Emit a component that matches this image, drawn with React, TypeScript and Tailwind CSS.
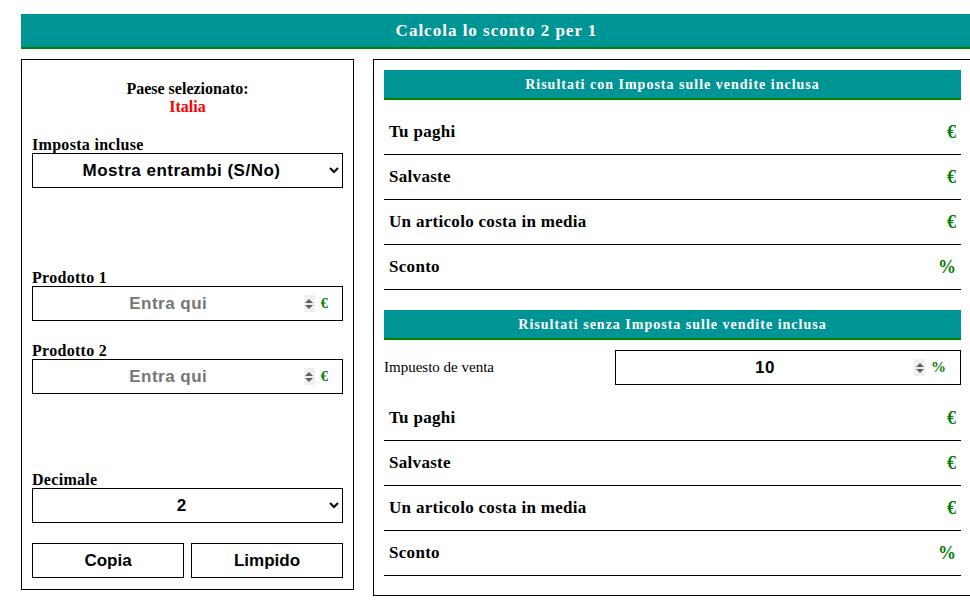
import React from 'react'

const serif = "font-['Liberation_Serif','Times_New_Roman',serif]"
const sans = "font-['Liberation_Sans',Arial,sans-serif]"

const ResultRow: React.FC<{ label: string; unit: string }> = ({ label, unit }) => (
  <div className="h-[45px] flex items-center justify-between pl-[5px] pr-[5px] border-b border-black">
    <span className="text-[17px] font-bold tracking-[0.3px] text-black">{label}</span>
    <span className="text-[18px] font-bold text-[#008000]">{unit}</span>
  </div>
)

const SubHeader: React.FC<{ title: string }> = ({ title }) => (
  <div className="h-[30px] flex items-center justify-center bg-[#009595] border-b-2 border-[#008000] text-white text-[14px] font-bold tracking-[1px]">
    {title}
  </div>
)

// small up/down arrows, drawn since the native spinner only shows on hover
const Spinner: React.FC = () => (
  <span className="w-[11px] h-[17px] bg-[#efefef] flex flex-col items-center justify-center gap-[2px]">
    <span className="w-0 h-0 border-x-[4px] border-x-transparent border-b-[4px] border-b-[#5f5f5f]" />
    <span className="w-0 h-0 border-x-[4px] border-x-transparent border-t-[4px] border-t-[#5f5f5f]" />
  </span>
)

const NumberField: React.FC<{ unit: string; value?: string; placeholder?: string; className?: string }> = ({
  unit,
  value,
  placeholder,
  className = '',
}) => (
  <div className={`h-[35px] flex items-center border border-black pr-[14px] ${className}`}>
    <input
      type="number"
      defaultValue={value}
      placeholder={placeholder}
      className={`${sans} flex-1 min-w-0 h-full text-center text-[17px] font-bold tracking-[0.5px] text-black placeholder:text-[#767676] outline-none [appearance:textfield] [&::-webkit-inner-spin-button]:appearance-none`}
    />
    <Spinner />
    <span className={`${serif} ml-[6px] text-[15px] font-bold text-[#008000]`}>{unit}</span>
  </div>
)

export default function App() {
  const rows = ['Tu paghi', 'Salvaste', 'Un articolo costa in media']
  return (
    <div className={`${serif} w-full overflow-x-hidden bg-white min-h-[600px]`}>
      <div className="w-[951px] ml-[21px] pt-[14px]">
        <div className="h-[35px] flex items-center justify-center bg-[#009595] border-b-2 border-[#008000] text-white text-[17px] font-bold tracking-[1px]">
          Calcola lo sconto 2 per 1
        </div>

        <div className="flex items-start gap-[19px] mt-[10px]">
          {/* left panel */}
          <section className="w-[333px] border border-black px-[10px] pt-[20px] pb-[11px]">
            <div className="text-center text-[16px] font-bold leading-[18px]">
              <div>Paese selezionato:</div>
              <div className="text-[#ff0000]">Italia</div>
            </div>

            <label className="block mt-[20px] text-[16px] font-bold leading-[17px] tracking-[0.3px]">Imposta incluse</label>
            <select
              className={`${sans} w-full h-[35px] border border-black text-center text-[17px] font-bold tracking-[0.5px] text-black`}
              defaultValue="both"
            >
              <option value="both">Mostra entrambi (S/No)</option>
              <option value="yes">Si</option>
              <option value="no">No</option>
            </select>

            <label className="block mt-[81px] text-[16px] font-bold leading-[17px] tracking-[0.3px]">Prodotto 1</label>
            <NumberField unit="€" placeholder="Entra qui" />

            <label className="block mt-[21px] text-[16px] font-bold leading-[17px] tracking-[0.3px]">Prodotto 2</label>
            <NumberField unit="€" placeholder="Entra qui" />

            <label className="block mt-[77px] text-[16px] font-bold leading-[17px] tracking-[0.3px]">Decimale</label>
            <select
              className={`${sans} w-full h-[35px] border border-black text-center text-[17px] font-bold text-black`}
              defaultValue="2"
            >
              <option value="0">0</option>
              <option value="1">1</option>
              <option value="2">2</option>
              <option value="3">3</option>
            </select>

            <div className="flex gap-[7px] mt-[20px]">
              <button className={`${sans} flex-1 h-[35px] border border-black text-[17px] font-bold`}>Copia</button>
              <button className={`${sans} flex-1 h-[35px] border border-black text-[17px] font-bold`}>Limpido</button>
            </div>
          </section>

          {/* right panel */}
          <section className="w-[599px] border border-black px-[10px] pt-[10px] pb-[19px]">
            <SubHeader title="Risultati con Imposta sulle vendite inclusa" />
            <div className="mt-[10px]">
              {rows.map((r) => (
                <ResultRow key={r} label={r} unit="€" />
              ))}
              <ResultRow label="Sconto" unit="%" />
            </div>

            <div className="mt-[20px]">
              <SubHeader title="Risultati senza Imposta sulle vendite inclusa" />
            </div>
            <div className="flex items-center mt-[10px]">
              <span className="w-[231px] text-[15px]">Impuesto de venta</span>
              <NumberField unit="%" value="10" className="flex-1" />
            </div>
            <div className="mt-[11px]">
              {rows.map((r) => (
                <ResultRow key={r} label={r} unit="€" />
              ))}
              <ResultRow label="Sconto" unit="%" />
            </div>
          </section>
        </div>
      </div>
    </div>
  )
}
